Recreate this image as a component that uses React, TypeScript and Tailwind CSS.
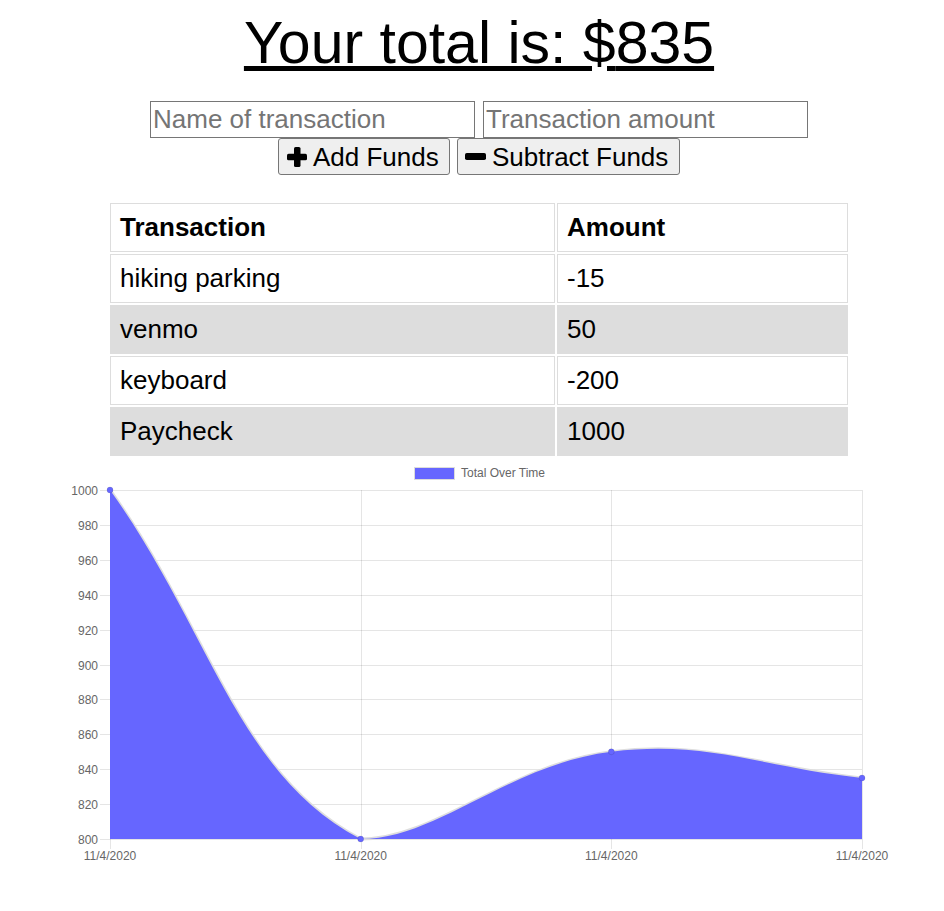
import React from 'react';

type Row = { name: string; value: number };

const rows: Row[] = [
  { name: 'hiking parking', value: -15 },
  { name: 'venmo', value: 50 },
  { name: 'keyboard', value: -200 },
  { name: 'Paycheck', value: 1000 },
];

const area = { left: 110, right: 862, top: 490, bottom: 839 };
const yMin = 800;
const yMax = 1000;

type Pt = { x: number; y: number };

function clamp(v: number, lo: number, hi: number) {
  return Math.max(lo, Math.min(hi, v));
}

// same spline as chart.js 2 (tension 0.4, capped to the chart area)
function buildPath(pts: Pt[]) {
  const t = 0.4;
  const ctrl = pts.map((p, i) => {
    const prev = pts[i - 1] ?? p;
    const next = pts[i + 1] ?? p;
    const d01 = Math.hypot(p.x - prev.x, p.y - prev.y);
    const d12 = Math.hypot(next.x - p.x, next.y - p.y);
    const s01 = d01 / (d01 + d12) || 0;
    const s12 = d12 / (d01 + d12) || 0;
    const fa = t * s01;
    const fb = t * s12;
    return {
      px: clamp(p.x - fa * (next.x - prev.x), area.left, area.right),
      py: clamp(p.y - fa * (next.y - prev.y), area.top, area.bottom),
      nx: clamp(p.x + fb * (next.x - prev.x), area.left, area.right),
      ny: clamp(p.y + fb * (next.y - prev.y), area.top, area.bottom),
    };
  });
  let d = `M${pts[0].x} ${pts[0].y}`;
  for (let i = 1; i < pts.length; i++) {
    d += ` C${ctrl[i - 1].nx} ${ctrl[i - 1].ny} ${ctrl[i].px} ${ctrl[i].py} ${pts[i].x} ${pts[i].y}`;
  }
  return d;
}

function TotalChart({ values }: { values: number[] }) {
  const step = (area.right - area.left) / (values.length - 1);
  const pts = values.map((v, i) => ({
    x: area.left + i * step,
    y: area.bottom - ((v - yMin) / (yMax - yMin)) * (area.bottom - area.top),
  }));
  const line = buildPath(pts);
  const fill = `${line} L${pts[pts.length - 1].x} ${area.bottom} L${pts[0].x} ${area.bottom} Z`;
  const ticks = Array.from({ length: 11 }, (_, i) => yMax - i * 20);
  const grid = 'rgba(0,0,0,0.1)';

  return (
    <svg
      width={944}
      height={453}
      viewBox="0 458 944 453"
      className="block"
      fontFamily="'Liberation Sans', Arial, sans-serif"
    >
      {/* legend */}
      <rect x={414.5} y={467.5} width={40} height={12} fill="#6666ff" stroke="#dcdcdc" strokeWidth={1} />
      <text x={461} y={476.5} fontSize={12} fill="#666">
        Total Over Time
      </text>

      {/* grid */}
      {ticks.map((v) => {
        const y = Math.round(area.bottom - ((v - yMin) / (yMax - yMin)) * (area.bottom - area.top)) + 0.5;
        return (
          <g key={v}>
            <line x1={100} x2={area.right} y1={y} y2={y} stroke={grid} strokeWidth={1} />
            <text x={98} y={y + 4} fontSize={12} fill="#666" textAnchor="end">
              {v}
            </text>
          </g>
        );
      })}
      {pts.map((p, i) => (
        <g key={i}>
          <line
            x1={Math.round(p.x) + 0.5}
            x2={Math.round(p.x) + 0.5}
            y1={area.top}
            y2={area.bottom + 10}
            stroke={grid}
            strokeWidth={1}
          />
          <text x={p.x} y={860} fontSize={12} fill="#666" textAnchor="middle">
            11/4/2020
          </text>
        </g>
      ))}

      {/* area */}
      <path d={line} fill="none" stroke="#dedede" strokeWidth={3} />
      <path d={fill} fill="#6666ff" />
      {pts.map((p, i) => (
        <circle key={i} cx={p.x} cy={p.y} r={3} fill="#6666ff" stroke="rgba(0,0,0,0.1)" strokeWidth={1} />
      ))}
    </svg>
  );
}

function PlusIcon() {
  return (
    <svg width={20} height={20} viewBox="0 0 20 20" className="shrink-0">
      <rect x={7} y={0} width={6.5} height={20} rx={1.6} fill="#000" />
      <rect x={0} y={6.8} width={20} height={6.5} rx={1.6} fill="#000" />
    </svg>
  );
}

function MinusIcon() {
  return (
    <svg width={21} height={7} viewBox="0 0 21 7" className="shrink-0">
      <rect x={0} y={0} width={21} height={7} rx={1.8} fill="#000" />
    </svg>
  );
}

export default function App() {
  let running = 0;
  const totals = [...rows].reverse().map((r) => (running += r.value));
  const total = rows.reduce((s, r) => s + r.value, 0);

  return (
    <div className="w-[944px] bg-white font-['Liberation_Sans',Arial,sans-serif] text-black">
      <div className="flex flex-col items-center pl-[14px] pt-[9px]">
        <h1 className="text-[59px] leading-[68px] underline">Your total is: ${total}</h1>

        <div className="mt-[24px] flex gap-[8px]">
          <input
            type="text"
            placeholder="Name of transaction"
            className="h-[37px] w-[325px] border border-[#767676] px-[2px] pt-[3px] pb-[3px] text-[26px] leading-[29px] placeholder:text-[#757575]"
          />
          <input
            type="number"
            placeholder="Transaction amount"
            className="h-[37px] w-[325px] border border-[#767676] px-[2px] pt-[3px] pb-[3px] text-[26px] leading-[29px] placeholder:text-[#757575]"
          />
        </div>

        <div className="flex gap-[7px]">
          <button className="flex h-[37px] w-[172px] items-center gap-[6px] rounded-[3px] border border-[#767676] bg-[#efefef] pl-[8px] text-[26px] leading-[30px]">
            <PlusIcon />
            Add Funds
          </button>
          <button className="flex h-[37px] w-[223px] items-center gap-[6px] rounded-[3px] border border-[#767676] bg-[#efefef] pl-[7px] text-[26px] leading-[30px]">
            <MinusIcon />
            Subtract Funds
          </button>
        </div>

        <table className="mt-[26px] w-[742px] table-fixed border-separate border-spacing-[2px] text-[26px] leading-[31px]">
          <thead>
            <tr>
              <th className="w-[445px] border border-[#dddddd] py-[8px] pl-[9px] text-left font-bold">
                Transaction
              </th>
              <th className="border border-[#dddddd] py-[8px] pl-[9px] text-left font-bold">Amount</th>
            </tr>
          </thead>
          <tbody>
            {rows.map((r, i) => (
              <tr key={r.name} className={i % 2 === 1 ? 'bg-[#dddddd]' : ''}>
                <td className="border border-[#dddddd] py-[8px] pl-[9px]">{r.name}</td>
                <td className="border border-[#dddddd] py-[8px] pl-[9px]">{r.value}</td>
              </tr>
            ))}
          </tbody>
        </table>
      </div>

      <TotalChart values={totals} />
    </div>
  );
}
